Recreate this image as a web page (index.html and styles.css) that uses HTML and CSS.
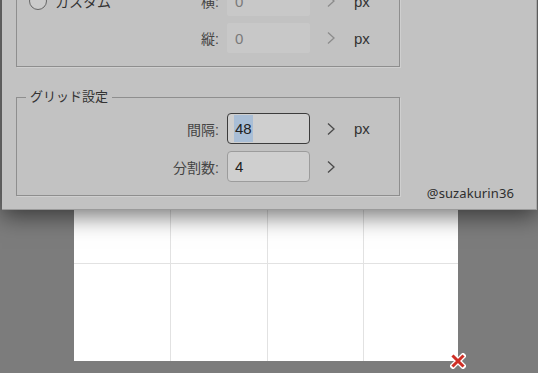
FILE: index.html
```html
<!DOCTYPE html>
<html lang="ja">
	<head>
		<meta charset="UTF-8" />
		<meta name="viewport" content="width=device-width, initial-scale=1.0" />
		<title>グリッド設定</title>
		<link rel="stylesheet" href="styles.css">
	</head>
	<body>
		<div class="dialog">
			<fieldset class="group">
				<div class="row">
					<div class="label label-split">
						<span class="radio-option"><span class="radio"></span>カスタム</span>
						<span>横:</span>
					</div>
					<div class="field field-disabled">0</div>
					<span class="chevron chevron-disabled">
						<svg width="8" height="12" viewBox="0 0 8 12"><polyline points="1,0.5 7,6 1,11.5" /></svg>
					</span>
					<span class="unit">px</span>
				</div>
				<div class="row">
					<div class="label">縦:</div>
					<div class="field field-disabled">0</div>
					<span class="chevron chevron-disabled">
						<svg width="8" height="12" viewBox="0 0 8 12"><polyline points="1,0.5 7,6 1,11.5" /></svg>
					</span>
					<span class="unit">px</span>
				</div>
			</fieldset>

			<fieldset class="group group-grid">
				<legend>グリッド設定</legend>
				<div class="row">
					<div class="label">間隔:</div>
					<div class="field field-focus"><span class="selected">48</span></div>
					<span class="chevron">
						<svg width="8" height="12" viewBox="0 0 8 12"><polyline points="1,0.5 7,6 1,11.5" /></svg>
					</span>
					<span class="unit">px</span>
				</div>
				<div class="row">
					<div class="label">分割数:</div>
					<div class="field">4</div>
					<span class="chevron">
						<svg width="8" height="12" viewBox="0 0 8 12"><polyline points="1,0.5 7,6 1,11.5" /></svg>
					</span>
				</div>
			</fieldset>

			<span class="watermark">@suzakurin36</span>
		</div>

		<div class="canvas-wrap">
			<div class="canvas">
				<div class="cell"></div>
				<div class="cell"></div>
				<div class="cell"></div>
				<div class="cell"></div>
				<div class="cell"></div>
				<div class="cell"></div>
				<div class="cell"></div>
				<div class="cell"></div>
			</div>
			<svg class="corner-mark" width="16" height="16" viewBox="0 0 16 16">
				<path d="M3,3 L13,13 M13,3 L3,13" stroke="#ffffff" stroke-width="5.5" stroke-linecap="square" />
				<path d="M3.5,3.5 L12.5,12.5 M12.5,3.5 L3.5,12.5" stroke="#cf2f26" stroke-width="3" stroke-linecap="square" />
			</svg>
		</div>
	</body>
</html>
```

FILE: styles.css
```css
html,
body {
	overflow: hidden;
}
body {
	margin: 0;
	width: 538px;
	height: 373px;
	background-color: #7c7c7c;
	font-family: 'Liberation Sans', 'Noto Sans CJK JP', sans-serif;
	font-size: 14px;
	color: #333;
}
.dialog {
	position: relative;
	z-index: 1;
	box-sizing: border-box;
	width: 535px;
	margin: -44px 0 0 2px;
	padding: 0 0 13px 14px;
	background-color: #c2c2c2;
	border-right: 1px solid #a8a8a8;
	border-bottom: 1px solid #9a9a9a;
	box-shadow: 0 6px 22px rgba(0, 0, 0, 0.55);
}
.group {
	box-sizing: border-box;
	width: 384px;
	margin: 0;
	padding: 29px 0 13px 0;
	border: 1px solid #8e8e8e;
	box-shadow: 1px 1px 0 #cfcfcf;
	min-width: 0;
}
.group-grid {
	margin-top: 22px;
	padding-top: 8px;
}
legend {
	margin-left: 9px;
	padding: 0 4px;
	font-size: 13px;
	line-height: 16px;
	color: #333;
}
.row {
	display: flex;
	align-items: center;
	height: 31px;
}
.row + .row {
	margin-top: 7px;
}
.group:first-of-type .row {
	height: 30px;
}
.label {
	box-sizing: border-box;
	width: 204px;
	padding-right: 2px;
	text-align: right;
	color: #444;
}
.label-split {
	display: flex;
	justify-content: space-between;
	align-items: center;
	padding-left: 12px;
}
.radio-option {
	display: flex;
	align-items: center;
	gap: 8px;
	color: #333;
}
.radio {
	box-sizing: border-box;
	width: 18px;
	height: 18px;
	border: 1.5px solid #666;
	border-radius: 50%;
	background-color: #cbcbcb;
}
.field {
	box-sizing: border-box;
	width: 83px;
	height: 100%;
	margin-left: 6px;
	padding: 0 7px;
	display: flex;
	align-items: center;
	background-color: #cfcfcf;
	border: 1px solid #9c9c9c;
	border-radius: 4px;
	font-size: 15px;
	color: #222;
}
.field-disabled {
	border-color: transparent;
	background-color: #c8c8c8;
	color: #7a7a7a;
	border-radius: 2px;
}
.field-focus {
	border-color: #3c3c3c;
	padding-left: 6px;
}
.selected {
	background-color: #a9bed6;
	line-height: 27px;
	padding: 0 1px;
}
.chevron {
	display: flex;
	margin-left: 17px;
}
.chevron polyline {
	fill: none;
	stroke: #4a4a4a;
	stroke-width: 1.3;
}
.chevron-disabled polyline {
	stroke: #8c8c8c;
}
.unit {
	margin-left: 19px;
	font-size: 15px;
	color: #333;
}
.watermark {
	position: absolute;
	right: 22px;
	bottom: 7px;
	font-family: 'Noto Sans', sans-serif;
	font-size: 13px;
	letter-spacing: 0.1px;
	color: #2e2e2e;
}
.canvas-wrap {
	position: relative;
	width: 384px;
	margin-left: 74px;
}
.canvas {
	display: grid;
	grid-template-columns: 96px 96px 95px 94px;
	grid-template-rows: 53px 97px;
	gap: 1px;
	background-color: #e2e2e2;
}
.cell {
	background-color: #fff;
}
.corner-mark {
	position: absolute;
	right: -8px;
	bottom: -8px;
}
```
